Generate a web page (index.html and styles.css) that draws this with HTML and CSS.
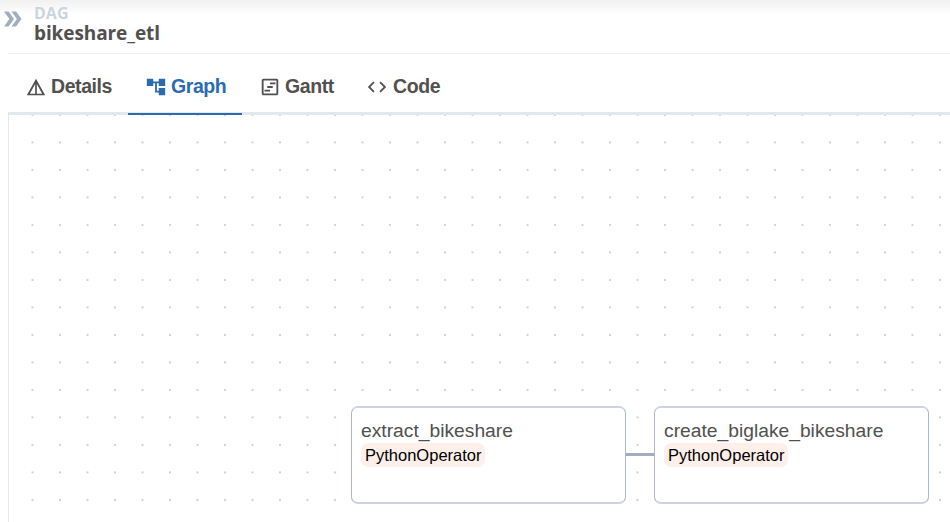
FILE: index.html
```
<!DOCTYPE html>
<html lang="en">
<head>
<meta charset="utf-8">
<title>bikeshare_etl</title>
<link rel="stylesheet" href="styles.css">
</head>
<body>
<header class="header">
  <svg class="expand" width="18" height="16" viewBox="0 0 18 16"><path d="M0 .5h4.600L10 8l-5.400 7.500H0L5.400 8zM7.500.5h4.600L17.500 8l-5.400 7.500H7.500L12.900 8z"/></svg>
  <div class="heading">
    <div class="kicker">DAG</div>
    <h1 class="title">bikeshare_etl</h1>
  </div>
</header>
<main class="panel">
  <nav class="tabs">
    <a class="tab details">
      <svg width="20" height="20" viewBox="0 0 24 24"><path d="M12 2 1 22h22L12 2zm1 6.500L19.400 20H13V8.500zm-2 0V20H4.600L11 8.500z"/></svg>
      <span>Details</span>
    </a>
    <a class="tab graph active">
      <svg width="22" height="22" viewBox="0 0 24 24"><path d="M22 11V3h-7v3H9V3H2v8h7V8h2v10h4v3h7v-8h-7v3h-2V8h2v3z"/></svg>
      <span>Graph</span>
    </a>
    <a class="tab gantt">
      <svg width="22" height="22" viewBox="0 0 24 24"><path d="M19 5v14H5V5h14m0-2H5c-1.100 0-2 .9-2 2v14c0 1.100.9 2 2 2h14c1.100 0 2-.9 2-2V5c0-1.100-.9-2-2-2zM12 9V7h6v2zM9 13v-2h6v2zM6 17v-2h6v2z"/></svg>
      <span>Gantt</span>
    </a>
    <a class="tab code">
      <svg width="22" height="22" viewBox="0 0 24 24"><path d="M9.400 16.600 4.800 12l4.600-4.600L8 6l-6 6 6 6 1.400-1.400zm5.200 0 4.600-4.600-4.600-4.600L16 6l6 6-6 6-1.400-1.400z"/></svg>
      <span>Code</span>
    </a>
  </nav>
  <section class="canvas">
    <svg class="grid" width="941" height="407">
      <defs>
        <pattern id="dots" x="9.750" y="-13.900" width="27.500" height="27.500" patternUnits="userSpaceOnUse"><circle cx="13.750" cy="13.750" r=".85"/></pattern>
      </defs>
      <rect width="941" height="407" fill="url(#dots)"/>
    </svg>
    <div class="edge"></div>
    <article class="node extract">
      <div class="name">extract_bikeshare</div>
      <div class="operator">PythonOperator</div>
    </article>
    <article class="node create">
      <div class="name">create_biglake_bikeshare</div>
      <div class="operator">PythonOperator</div>
    </article>
  </section>
</main>
</body>
</html>
```
FILE: styles.css
```
* { box-sizing: border-box; }
body {
  margin: 0;
  height: 522px;
  overflow: hidden;
  background: #fff;
  color: #51504f;
  font-family: "Liberation Sans", Arial, sans-serif;
}
.header {
  display: flex;
  height: 53px;
  padding: 4px 0 0 4px;
  background: linear-gradient(#f1f1f1, #fff 15px);
}
.expand { margin-top: 7px; fill: #a0aec0; }
.heading { margin-left: 12px; font-family: "Open Sans", "Noto Sans", sans-serif; font-weight: 700; }
.kicker { height: 19px; font-size: 16px; line-height: 19px; color: #cbd5e0; }
.title { margin: 0; font-size: 19px; line-height: 20px; letter-spacing: -.1px; }
.panel { margin-left: 8px; border-top: 1px solid #edeef0; }
.tabs {
  display: flex;
  height: 61px;
  border-bottom: 3px solid #e2e8f0;
}
.tab {
  display: flex;
  align-items: center;
  height: 61px;
  padding-top: 6px;
  border-bottom: 2px solid transparent;
  font-size: 19.500px;
  font-weight: 700;
  letter-spacing: -.42px;
}
.tab svg { flex: none; fill: currentColor; }
.tab span { position: relative; top: -.5px; }
.details { width: 120px; padding-left: 18px; }
.details span { margin-left: 5px; }
.graph { width: 114px; padding-left: 17px; }
.graph span { margin-left: 4px; }
.gantt { width: 115px; padding-left: 17px; }
.gantt span { margin-left: 4px; }
.code { padding-left: 9px; }
.code span { margin-left: 5px; }
.active { color: #2b6cb0; border-bottom-color: #2b6cb0; }
.canvas {
  position: relative;
  height: 407px;
  border-left: 1px solid #e2e8f0;
}
.grid { display: block; fill: #a4a4a4; }
.node {
  position: absolute;
  top: 291px;
  width: 275px;
  height: 98px;
  padding: 13px 9px;
  border: solid;
  border-width: 2px 1px;
  border-color: #cdd4e0 #abb7c8;
  border-radius: 7px;
  background: #fff;
}
.extract { left: 342px; }
.create { left: 645px; }
.name { height: 22px; font-size: 19.250px; line-height: 20px; white-space: nowrap; }
.operator {
  width: 124px;
  height: 24px;
  padding-left: 4px;
  border-radius: 7px;
  background: #ffefeb;
  color: #000;
  font-size: 16.500px;
  line-height: 24px;
}
.edge {
  position: absolute;
  left: 616px;
  top: 338px;
  width: 30px;
  height: 3px;
  background: #a0aec0;
}
```
